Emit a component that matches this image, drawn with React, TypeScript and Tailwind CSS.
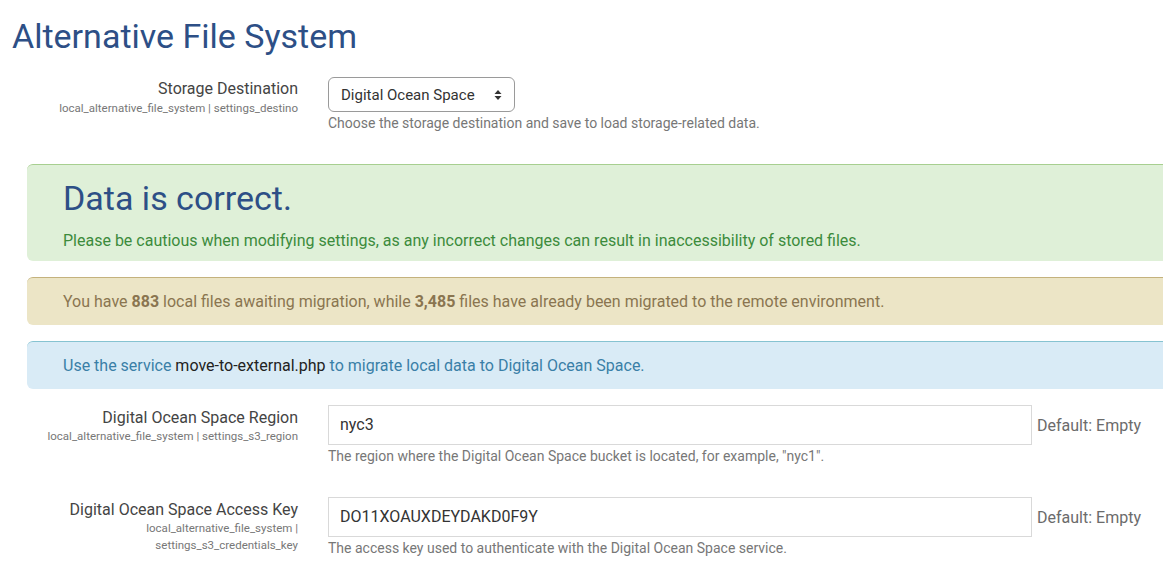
import React from "react";

const font = { fontFamily: "Roboto, 'Noto Sans', sans-serif" };

function Row({
  label,
  sub,
  children,
  help,
  def,
}: {
  label: string;
  sub: React.ReactNode;
  children: React.ReactNode;
  help: string;
  def?: string;
}) {
  return (
    <div className="flex">
      <div className="w-[298px] shrink-0 text-right pt-[2px]">
        <div className="text-[16px] leading-[21px] text-[#444]">{label}</div>
        <div className="text-[11.5px] leading-[17px] text-[#777]">{sub}</div>
      </div>
      <div className="ml-[30px] flex-1">
        <div className="flex items-center">
          {children}
          {def && <span className="ml-[5px] text-[16px] text-[#6b6b6b] pt-[2px]">{def}</span>}
        </div>
        <div className="text-[14px] leading-[18px] text-[#777] mt-[2px]">{help}</div>
      </div>
    </div>
  );
}

export default function App() {
  return (
    <div className="w-[1163px] h-[573px] overflow-hidden bg-white" style={font}>
      <h1 className="text-[34px] leading-[38px] text-[#2d4f86] pl-[12px] pt-[17px]">
        Alternative File System
      </h1>

      <div className="mt-[22px]">
        <div className="flex">
          <div className="w-[298px] shrink-0 text-right pt-[1px]">
            <div className="text-[16px] leading-[22px] text-[#444]">Storage Destination</div>
            <div className="text-[11.5px] leading-[16px] text-[#777]">
              local_alternative_file_system | settings_destino
            </div>
          </div>
          <div className="ml-[30px]">
            <div className="w-[187px] h-[35px] border border-[#9a9a9a] rounded-[6px] flex items-center justify-between pl-[12px] pr-[12px]">
              <span className="text-[15px] text-[#333] pt-[1px]">Digital Ocean Space</span>
              <svg width="8" height="12" viewBox="0 0 8 12">
                <path d="M4 1 L7.5 5 L0.5 5 Z" fill="#333" />
                <path d="M4 11 L7.5 7 L0.5 7 Z" fill="#333" />
              </svg>
            </div>
            <div className="text-[14px] leading-[18px] text-[#777] mt-[2px]">
              Choose the storage destination and save to load storage-related data.
            </div>
          </div>
        </div>
      </div>

      <div className="ml-[27px] w-[1200px] mt-[32px]">
        <div className="h-[97px] bg-[#dff0d8] border-t border-[#a7cf90] rounded-[6px] pl-[36px] pt-[14px]">
          <div className="text-[34px] leading-[38px] text-[#2d4f86]">Data is correct.</div>
          <div className="text-[16px] leading-[20px] text-[#3c8b3c] mt-[14px]">
            Please be cautious when modifying settings, as any incorrect changes can result in
            inaccessibility of stored files.
          </div>
        </div>

        <div className="h-[48px] mt-[16px] bg-[#ece5c6] border-t border-[#c4b27d] rounded-[6px] pl-[36px] flex items-center">
          <span className="text-[16px] text-[#8a7550]">
            You have <b>883</b> local files awaiting migration, while <b>3,485</b> files have
            already been migrated to the remote environment.
          </span>
        </div>

        <div className="h-[48px] mt-[16px] bg-[#d9ebf6] border-t border-[#86c3d1] rounded-[6px] pl-[36px] flex items-center">
          <span className="text-[16px] text-[#3a7fa7]">
            Use the service <span className="text-[#222]">move-to-external.php</span> to migrate
            local data to Digital Ocean Space.
          </span>
        </div>
      </div>

      <div className="mt-[16px]">
        <Row
          label="Digital Ocean Space Region"
          sub="local_alternative_file_system | settings_s3_region"
          help={'The region where the Digital Ocean Space bucket is located, for example, "nyc1".'}
          def="Default: Empty"
        >
          <div className="w-[704px] h-[40px] border border-[#d9d9d9] flex items-center pl-[11px] text-[16px] text-[#333]">
            nyc3
          </div>
        </Row>
      </div>

      <div className="mt-[32px]">
        <Row
          label="Digital Ocean Space Access Key"
          sub={
            <>
              local_alternative_file_system |<br />settings_s3_credentials_key
            </>
          }
          help="The access key used to authenticate with the Digital Ocean Space service."
          def="Default: Empty"
        >
          <div className="w-[704px] h-[40px] border border-[#d9d9d9] flex items-center pl-[11px] text-[16px] text-[#333]">
            DO11XOAUXDEYDAKD0F9Y
          </div>
        </Row>
      </div>
    </div>
  );
}
